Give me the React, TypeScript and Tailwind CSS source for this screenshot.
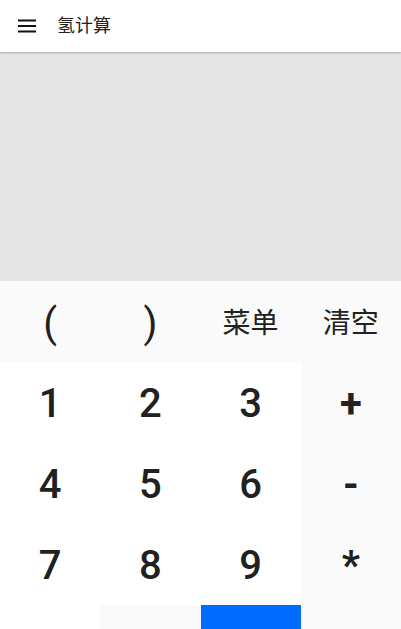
const font = { fontFamily: '"Roboto", "Noto Sans CJK SC", sans-serif' };

type Key = {
    label: string;
    className: string;
};

const topRow: Key[] = [
    { label: "(", className: "text-[40px]" },
    { label: ")", className: "text-[40px]" },
    { label: "菜单", className: "text-[28px]" },
    { label: "清空", className: "text-[28px]" },
];

const digitRows: string[][] = [
    ["1", "2", "3", "+"],
    ["4", "5", "6", "-"],
    ["7", "8", "9", "*"],
];

function MenuIcon() {
    return (
        <svg width="24" height="24" viewBox="0 0 24 24" className="fill-[#111]">
            <rect x="3" y="5.5" width="18" height="2" />
            <rect x="3" y="11" width="18" height="2" />
            <rect x="3" y="16.5" width="18" height="2" />
        </svg>
    );
}

export default function App() {
    return (
        <div
            className="flex h-[629px] w-[401px] flex-col overflow-hidden bg-white text-[#212121]"
            style={font}
        >
            {/* Toolbar */}
            <header className="relative z-10 flex h-[52px] shrink-0 items-center gap-[18px] bg-white pl-[15px] shadow-[0_1px_2px_rgba(0,0,0,0.28)]">
                <MenuIcon />
                <span className="text-[18px] leading-none">氢计算</span>
            </header>

            {/* Display */}
            <div className="h-[229px] shrink-0 bg-[#e6e6e6]" />

            {/* Keypad */}
            <div className="grid grid-cols-4">
                {topRow.map((key) => (
                    <div
                        key={key.label}
                        className={`flex h-[81px] items-center justify-center bg-[#fafafa] pt-[4px] font-normal ${key.className}`}
                    >
                        {key.label}
                    </div>
                ))}

                {digitRows.map((row) =>
                    row.map((label, i) => (
                        <div
                            key={label}
                            className={`flex h-[81px] items-center justify-center pt-[3px] text-[40px] ${
                                i === 3 ? "bg-[#fafafa] font-bold" : "bg-white font-medium"
                            }`}
                        >
                            {label}
                        </div>
                    )),
                )}

                <div className="h-[81px] bg-white" />
                <div className="h-[81px] bg-[#fafafa]" />
                <div className="h-[81px] bg-[#006cff]" />
                <div className="h-[81px] bg-[#fafafa]" />
            </div>
        </div>
    );
}
